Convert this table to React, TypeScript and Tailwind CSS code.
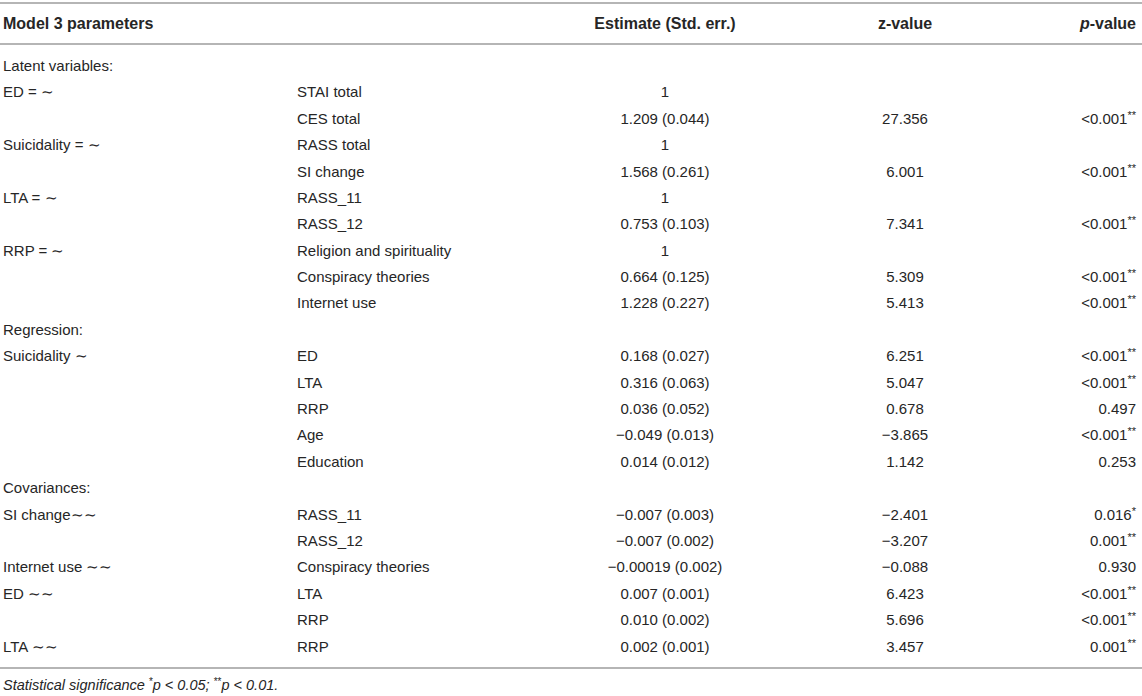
import React from 'react';

type Row = {
  label?: string;
  item?: string;
  est?: string;
  z?: string;
  p?: string;
  sig?: string;
  section?: boolean;
};

const rows: Row[] = [
  { label: 'Latent variables:', section: true },
  { label: 'ED = ∼', item: 'STAI total', est: '1' },
  { item: 'CES total', est: '1.209 (0.044)', z: '27.356', p: '<0.001', sig: '**' },
  { label: 'Suicidality = ∼', item: 'RASS total', est: '1' },
  { item: 'SI change', est: '1.568 (0.261)', z: '6.001', p: '<0.001', sig: '**' },
  { label: 'LTA = ∼', item: 'RASS_11', est: '1' },
  { item: 'RASS_12', est: '0.753 (0.103)', z: '7.341', p: '<0.001', sig: '**' },
  { label: 'RRP = ∼', item: 'Religion and spirituality', est: '1' },
  { item: 'Conspiracy theories', est: '0.664 (0.125)', z: '5.309', p: '<0.001', sig: '**' },
  { item: 'Internet use', est: '1.228 (0.227)', z: '5.413', p: '<0.001', sig: '**' },
  { label: 'Regression:', section: true },
  { label: 'Suicidality ∼', item: 'ED', est: '0.168 (0.027)', z: '6.251', p: '<0.001', sig: '**' },
  { item: 'LTA', est: '0.316 (0.063)', z: '5.047', p: '<0.001', sig: '**' },
  { item: 'RRP', est: '0.036 (0.052)', z: '0.678', p: '0.497' },
  { item: 'Age', est: '−0.049 (0.013)', z: '−3.865', p: '<0.001', sig: '**' },
  { item: 'Education', est: '0.014 (0.012)', z: '1.142', p: '0.253' },
  { label: 'Covariances:', section: true },
  { label: 'SI change∼∼', item: 'RASS_11', est: '−0.007 (0.003)', z: '−2.401', p: '0.016', sig: '*' },
  { item: 'RASS_12', est: '−0.007 (0.002)', z: '−3.207', p: '0.001', sig: '**' },
  { label: 'Internet use ∼∼', item: 'Conspiracy theories', est: '−0.00019 (0.002)', z: '−0.088', p: '0.930' },
  { label: 'ED ∼∼', item: 'LTA', est: '0.007 (0.001)', z: '6.423', p: '<0.001', sig: '**' },
  { item: 'RRP', est: '0.010 (0.002)', z: '5.696', p: '<0.001', sig: '**' },
  { label: 'LTA ∼∼', item: 'RRP', est: '0.002 (0.001)', z: '3.457', p: '0.001', sig: '**' },
];

const cols = 'grid grid-cols-[294px_253px_230px_250px_106px]';

export default function App() {
  return (
    <div
      className="w-[1142px] h-[696px] bg-white text-[#262626] pt-[2px]"
      style={{ fontFamily: '"Liberation Sans", Arial, sans-serif' }}
    >
      <div className="border-t-2 border-[#b5b5b5]" />
      <div className={`${cols} pl-[3px] h-[39px] items-center text-[16px] font-bold`}>
        <div>Model 3 parameters</div>
        <div />
        <div className="text-center">Estimate (Std. err.)</div>
        <div className="text-center">z-value</div>
        <div className="text-right">
          <span className="italic">p</span>-value
        </div>
      </div>
      <div className="border-t-2 border-[#b5b5b5]" />

      <div className="pt-[8px] pb-[7px]">
        {rows.map((r, i) => (
          <div key={i} className={`${cols} pl-[3px] h-[26.4px] items-center text-[15px]`}>
            <div className="whitespace-nowrap">{r.label}</div>
            <div className="whitespace-nowrap">{r.item}</div>
            <div className="text-center">{r.est}</div>
            <div className="text-center">{r.z}</div>
            <div className="text-right whitespace-nowrap">
              {r.p}
              {r.sig && <sup className="text-[11px] top-[-5px]">{r.sig}</sup>}
            </div>
          </div>
        ))}
      </div>

      <div className="border-t-2 border-[#b5b5b5]" />
      <div className="pl-[3px] pt-[6px] text-[14.5px] italic">
        Statistical significance <sup className="text-[10px] not-italic">*</sup>p &lt; 0.05;{' '}
        <sup className="text-[10px] not-italic">**</sup>p &lt; 0.01.
      </div>
    </div>
  );
}
